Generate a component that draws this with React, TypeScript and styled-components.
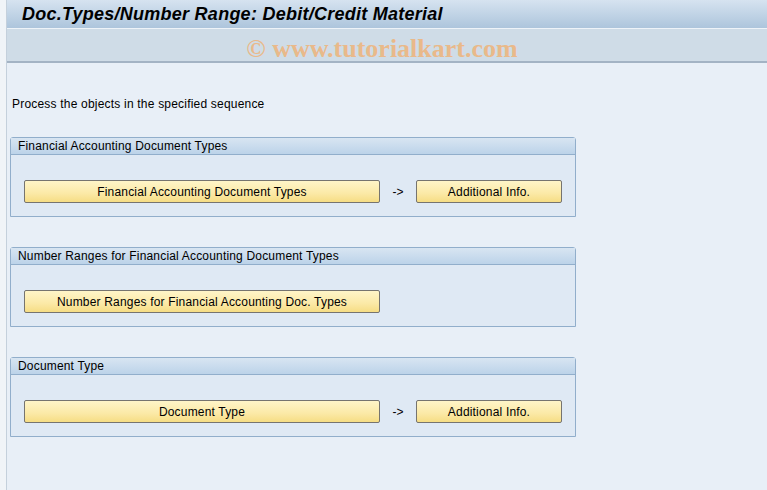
import React from "react";
import styled, { createGlobalStyle } from "styled-components";

const Global = createGlobalStyle`
  html, body { margin: 0; padding: 0; background: #e8eff7; }
  body { font-family: "Liberation Sans", Arial, sans-serif; }
`;

const Frame = styled.div`
  display: flex;
  width: 767px;
  height: 490px;
  overflow: hidden;
`;

const Strip = styled.div`
  width: 6px;
  flex: none;
  background: #f0f4f8;
  border-right: 1px solid #c4d0dc;
`;

const Main = styled.div`
  flex: 1;
  display: flex;
  flex-direction: column;
  background: #e8eff7;
`;

const TitleBar = styled.div`
  height: 29px;
  box-sizing: border-box;
  background: linear-gradient(#d6e3f0, #adc5dc);
  display: flex;
  align-items: center;
  padding-left: 15px;
  border-bottom: 1px solid #eef3f8;
`;

const Title = styled.h1`
  margin: 0;
  font-family: "Liberation Sans", Arial, sans-serif;
  font-size: 18px;
  font-weight: bold;
  font-style: italic;
  color: #000;
  letter-spacing: 0.25px;
`;

const Toolbar = styled.div`
  height: 34px;
  box-sizing: border-box;
  background: #cfdce7;
  border-bottom: 2px solid #a3b3c4;
  display: flex;
  align-items: center;
  justify-content: center;
  padding: 8px 10px 0 0;
`;

const Watermark = styled.span`
  font-family: "Liberation Serif", "Times New Roman", serif;
  font-weight: bold;
  font-size: 26px;
  line-height: 26px;
  color: #e9b98a;
`;

const Content = styled.div`
  flex: 1;
  padding: 0 0 0 3px;
  display: flex;
  flex-direction: column;
`;

const Intro = styled.div`
  font-size: 12px;
  letter-spacing: 0.2px;
  color: #000;
  padding-left: 2px;
  margin-top: 34px;
  height: 15px;
  line-height: 15px;
`;

const Groups = styled.div`
  margin-top: 25px;
  display: flex;
  flex-direction: column;
  gap: 30px;
`;

const Group = styled.section`
  width: 566px;
  height: 80px;
  box-sizing: border-box;
  border: 1px solid #91aecb;
  border-radius: 3px 3px 0 0;
  background: #dfe9f4;
  display: flex;
  flex-direction: column;
`;

const GroupHeader = styled.div`
  height: 17px;
  box-sizing: border-box;
  background: linear-gradient(#d8e5f2, #bcd3e9);
  border-bottom: 1px solid #91aecb;
  font-size: 12px;
  letter-spacing: 0.18px;
  line-height: 16px;
  padding-left: 7px;
  color: #000;
`;

const Row = styled.div`
  display: flex;
  align-items: center;
  padding: 25px 0 0 13px;
`;

const Button = styled.button<{ $w: number }>`
  width: ${(p) => p.$w}px;
  height: 23px;
  box-sizing: border-box;
  border: 1px solid #76746f;
  border-radius: 2px;
  background: linear-gradient(#fff5c8, #fbe9a6 60%, #f6dd84);
  font-family: "Liberation Sans", Arial, sans-serif;
  font-size: 12px;
  letter-spacing: 0.18px;
  color: #000;
  padding: 0;
  cursor: pointer;
`;

const Arrow = styled.span`
  width: 36px;
  text-align: center;
  font-size: 12px;
  color: #000;
`;

type G = { title: string; main: string; info: boolean };

const groups: G[] = [
  { title: "Financial Accounting Document Types", main: "Financial Accounting Document Types", info: true },
  { title: "Number Ranges for Financial Accounting Document Types", main: "Number Ranges for Financial Accounting Doc. Types", info: false },
  { title: "Document Type", main: "Document Type", info: true },
];

export default function App() {
  return (
    <Frame>
      <Global />
      <Strip />
      <Main>
        <TitleBar>
          <Title>Doc.Types/Number Range: Debit/Credit Material</Title>
        </TitleBar>
        <Toolbar>
          <Watermark>© www.tutorialkart.com</Watermark>
        </Toolbar>
        <Content>
          <Intro>Process the objects in the specified sequence</Intro>
          <Groups>
            {groups.map((g) => (
              <Group key={g.title}>
                <GroupHeader>{g.title}</GroupHeader>
                <Row>
                  <Button $w={356}>{g.main}</Button>
                  {g.info && (
                    <>
                      <Arrow>-&gt;</Arrow>
                      <Button $w={146}>Additional Info.</Button>
                    </>
                  )}
                </Row>
              </Group>
            ))}
          </Groups>
        </Content>
      </Main>
    </Frame>
  );
}
